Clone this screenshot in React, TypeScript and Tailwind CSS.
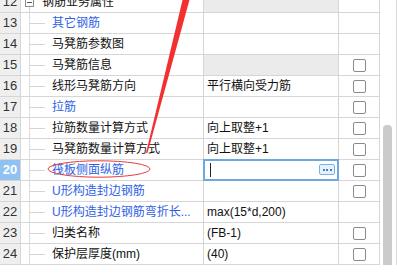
import { Fragment } from 'react';

type Row = {
  no: number;
  name: string;
  blue?: boolean;
  value?: string;
  check?: boolean;
  grayValue?: boolean;
  group?: boolean;
};

const rows: Row[] = [
  { no: 12, name: '钢筋业务属性', group: true, grayValue: true },
  { no: 13, name: '其它钢筋', blue: true },
  { no: 14, name: '马凳筋参数图' },
  { no: 15, name: '马凳筋信息', grayValue: true, check: true },
  { no: 16, name: '线形马凳筋方向', value: '平行横向受力筋', check: true },
  { no: 17, name: '拉筋', blue: true, check: true },
  { no: 18, name: '拉筋数量计算方式', value: '向上取整+1', check: true },
  { no: 19, name: '马凳筋数量计算方式', value: '向上取整+1', check: true },
  { no: 20, name: '筏板侧面纵筋', blue: true, check: true },
  { no: 21, name: 'U形构造封边钢筋', blue: true, check: true },
  { no: 22, name: 'U形构造封边钢筋弯折长...', blue: true, value: 'max(15*d,200)' },
  { no: 23, name: '归类名称', value: '(FB-1)', check: true },
  { no: 24, name: '保护层厚度(mm)', value: '(40)', check: true },
];

const font = { fontFamily: '"Liberation Sans", "Noto Sans CJK SC", sans-serif' };

const App = () => {
  return (
    <div className="relative w-[397px] h-[278px] overflow-hidden bg-white text-[12px] text-[#111]" style={font}>
      <div className="flex">
        {/* Grid */}
        <div className="w-[380px] -mt-[8px]">
          {rows.map((r) => {
            const active = r.no === 20;
            return (
              <div key={r.no} className="flex h-[21px] border-b border-[#d6d6d6]">
                {/* row header */}
                <div
                  className={
                    active
                      ? 'w-[21px] shrink-0 border-r border-[#d6d6d6] bg-[#8fc1f2] text-white font-bold flex items-center justify-center text-[13px]'
                      : 'w-[21px] shrink-0 border-r border-[#d6d6d6] bg-[#efefef] text-[#333] flex items-center justify-center text-[13px]'
                  }
                >
                  {r.no}
                </div>

                {/* name column with tree */}
                <div className="relative w-[183px] shrink-0 border-r border-[#d6d6d6] flex items-center">
                  {r.group ? (
                    <Fragment>
                      <div className="absolute left-[4px] top-[6px] w-[9px] h-[9px] border border-[#8c8c8c] bg-white flex items-center justify-center">
                        <div className="w-[5px] h-px bg-[#555]" />
                      </div>
                      <div className="absolute left-[8px] top-[15px] bottom-0 w-px bg-[#d4d4d4]" />
                      <span className="pl-[21px]">{r.name}</span>
                    </Fragment>
                  ) : (
                    <Fragment>
                      <div className="absolute left-[8px] top-0 bottom-0 w-px bg-[#dcdcdc]" />
                      <div className="absolute left-[9px] top-[10px] w-[15px] h-px bg-[#d4d4d4]" />
                      <span className={'pl-[31px] whitespace-nowrap ' + (r.blue ? 'text-[#2f62e3]' : 'text-[#111]')}>
                        {r.name}
                      </span>
                    </Fragment>
                  )}
                </div>

                {/* value column */}
                <div
                  className={
                    'relative w-[135px] shrink-0 border-r border-[#d6d6d6] flex items-center pl-[3px] ' +
                    (r.grayValue ? 'bg-[#ebebeb]' : 'bg-white')
                  }
                >
                  {r.value}
                  {active && (
                    <div className="absolute -left-px -top-px w-[136px] h-[22px] border-2 border-[#6ea7e2] bg-white">
                      <div className="absolute left-[5px] top-[2px] w-px h-[14px] bg-[#222]" />
                      <div className="absolute right-[2px] top-[3px] w-[16px] h-[11px] rounded-[2px] border border-[#7eb0e6] bg-[#e6f1fc] flex items-center justify-center gap-[1.5px]">
                        <div className="w-[2px] h-[2px] bg-[#3d7fd0]" />
                        <div className="w-[2px] h-[2px] bg-[#3d7fd0]" />
                        <div className="w-[2px] h-[2px] bg-[#3d7fd0]" />
                      </div>
                    </div>
                  )}
                </div>

                {/* checkbox column */}
                <div className="w-[41px] shrink-0 border-r border-[#d6d6d6] flex items-center justify-center">
                  {r.check && (
                    <div className="w-[13px] h-[13px] rounded-[2px] border border-[#8a8a8a] bg-white" />
                  )}
                </div>
              </div>
            );
          })}
        </div>

        {/* Scrollbar */}
        <div className="w-[17px] h-[265px] border-r border-[#dadada] flex">
          <div className="ml-[3px] w-[9px] mt-[125px] h-[140px] rounded-t-[4px] bg-[#cbcbcb]" />
        </div>
      </div>

      {/* Annotations */}
      <svg className="absolute inset-0 pointer-events-none" width="397" height="278">
        <polygon points="183,-2 190,-2 147.5,153 146,153" fill="#f23030" />
        <ellipse cx="99" cy="169" rx="51" ry="8.2" fill="none" stroke="#e83c3c" strokeWidth="1" />
      </svg>
    </div>
  );
};

export default App;
